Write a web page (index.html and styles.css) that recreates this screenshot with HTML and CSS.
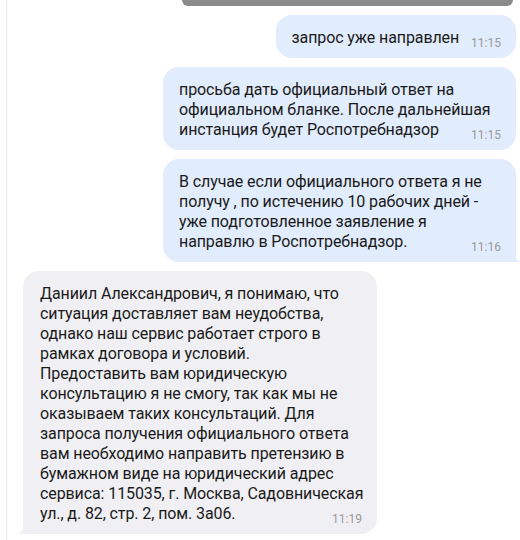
FILE: index.html
```html
<!DOCTYPE html>
<html lang="ru">
<head>
<meta charset="utf-8">
<link rel="stylesheet" href="styles.css">
</head>
<body>
<div class="chat">
  <div class="media"></div>

  <div class="msg out">
    <span class="text">запрос уже направлен</span><span class="time">11:15</span>
  </div>

  <div class="msg out wide">
    <span class="text">просьба дать официальный ответ на<br>официальном бланке. После дальнейшая<br>инстанция будет Роспотребнадзор</span><span class="time">11:15</span>
  </div>

  <div class="msg out wide last">
    <span class="text">В случае если официального ответа я не<br>получу , по истечению 10 рабочих дней -<br>уже подготовленное заявление я<br>направлю в Роспотребнадзор.</span><span class="time">11:16</span>
    <svg class="tail tail-r" width="6" height="10" viewBox="0 0 6 10"><path d="M0 0 C0 5 2 9 6 10 L0 10 Z" fill="#e1ecfd"/></svg>
  </div>

  <div class="msg in wide last">
    <span class="text">Даниил Александрович, я понимаю, что<br>ситуация доставляет вам неудобства,<br>однако наш сервис работает строго в<br>рамках договора и условий.<br>Предоставить вам юридическую<br>консультацию я не смогу, так как мы не<br>оказываем таких консультаций. Для<br>запроса получения официального ответа<br>вам необходимо направить претензию в<br>бумажном виде на юридический адрес<br>сервиса: 115035, г. Москва, Садовническая<br>ул., д. 82, стр. 2, пом. 3а06.</span><span class="time">11:19</span>
    <svg class="tail tail-l" width="6" height="10" viewBox="0 0 6 10"><path d="M6 0 C6 5 4 9 0 10 L6 10 Z" fill="#f0f0f4"/></svg>
  </div>
</div>
</body>
</html>
```

FILE: styles.css
```css
html, body {
  margin: 0;
  padding: 0;
  background: #ffffff;
}

.chat {
  margin-left: 6px;
  border-left: 1px solid #e7e7e7;
  min-height: 540px;
  box-sizing: border-box;
  padding: 0 4px 0 16px;
  display: flex;
  flex-direction: column;
  gap: 9px;
  font-family: Roboto, "Noto Sans", sans-serif;
  font-size: 16px;
  line-height: 20px;
  color: #1a1a1a;
}

.media {
  align-self: flex-end;
  width: 331px;
  height: 6px;
  margin-right: 3px;
  background: #8b8b8b;
  border-radius: 0 0 14px 14px;
}

.msg {
  position: relative;
  display: flow-root;
  box-sizing: border-box;
  padding: 13px 15px 10px 16px;
  border-radius: 16px;
}

.text {
  white-space: nowrap;
  letter-spacing: -0.1px;
}

.msg.out {
  align-self: flex-end;
  background: #e1ecfd;
}

.msg.in {
  align-self: flex-start;
  background: #f0f0f4;
  padding-left: 17px;
}

.msg.wide {
  width: 353px;
}

.msg.in.wide {
  width: 354px;
}

.msg.out.last {
  border-bottom-right-radius: 0;
}

.msg.in.last {
  border-bottom-left-radius: 0;
}

.time {
  float: right;
  font-size: 12px;
  line-height: 16px;
  color: #999999;
  margin: 7px 0 -7px 12px;
}

.tail {
  position: absolute;
  bottom: 0;
  display: block;
}

.tail-r {
  right: -5px;
}

.tail-l {
  left: -5px;
}
```
